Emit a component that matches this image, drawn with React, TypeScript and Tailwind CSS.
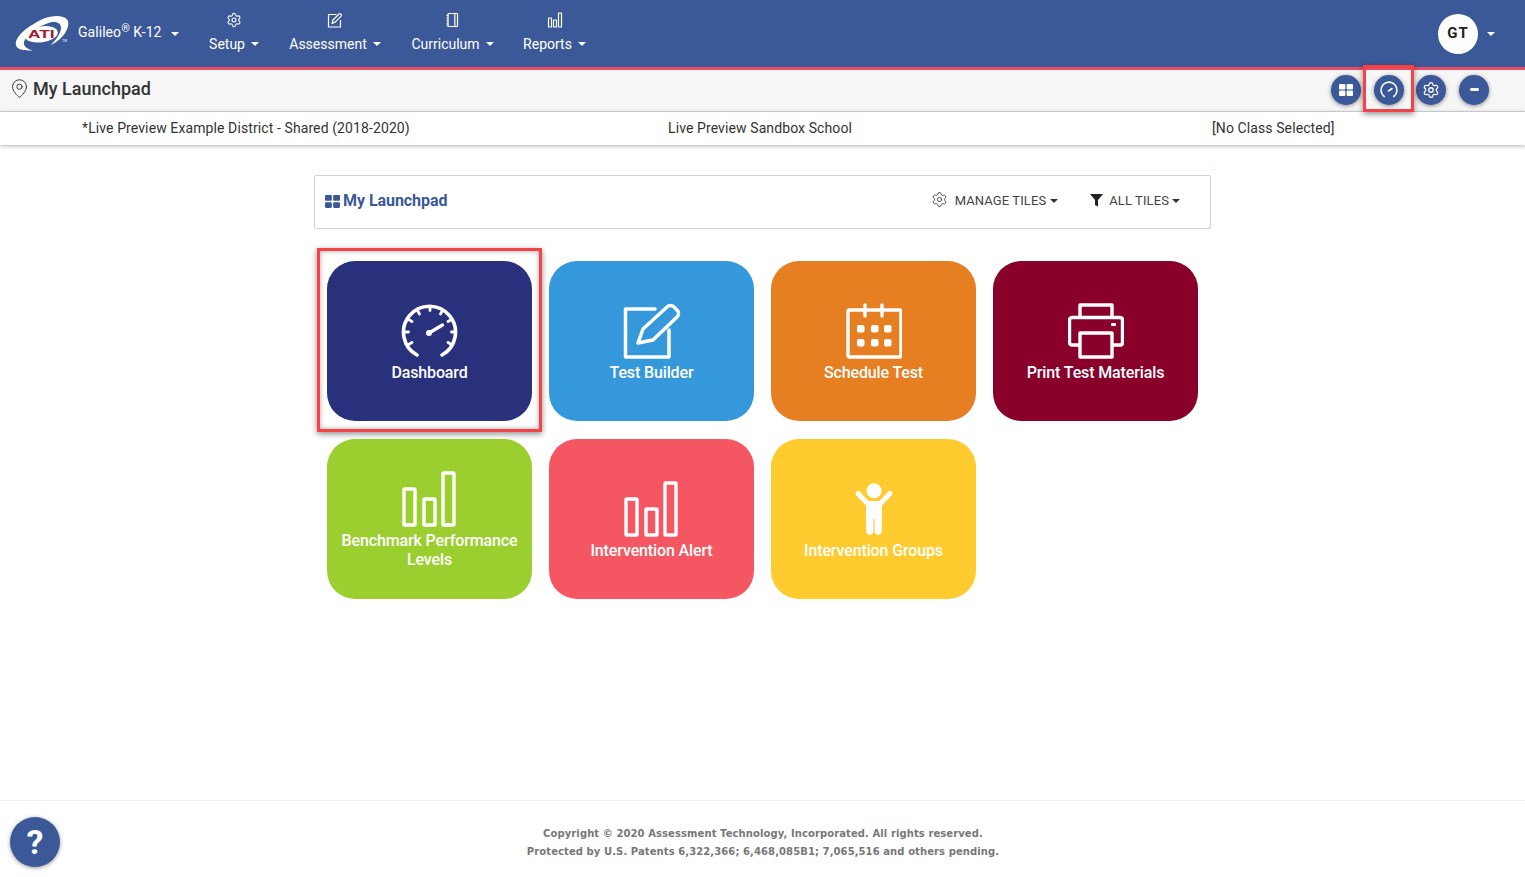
import React from 'react';
import { Settings, MapPin } from 'lucide-react';

const Caret = ({ className = 'border-t-white' }: { className?: string }) => (
  <span className={`inline-block h-0 w-0 border-x-[4px] border-t-[4px] border-x-transparent ${className}`} />
);

// drawn on the 3x crop of the logo, so 210x150 units -> 70x50 px
const Logo = () => (
  <svg width="70" height="50" viewBox="0 0 210 150" className="shrink-0">
    <path d="M172 32C130 18 62 40 30 85C14 110 26 128 74 124C48 118 40 104 56 84C82 52 130 34 172 32Z" fill="#fff" />
    <path d="M70 52C100 22 160 10 178 32C190 52 165 92 128 108C150 88 166 62 156 46C144 32 100 36 70 52Z" fill="#fff" />
    <ellipse cx="100" cy="76" rx="50" ry="24" transform="rotate(-8 100 76)" fill="#fff" />
    <text x="60" y="86" fontSize="30" fontWeight="700" fill="#a4162e" textLength="80" lengthAdjust="spacingAndGlyphs" fontFamily="'Liberation Sans', sans-serif">ATI</text>
    <text x="163" y="100" fontSize="10" fill="#fff" fontFamily="'Liberation Sans', sans-serif">TM</text>
  </svg>
);

const NotebookIcon = () => (
  <svg width="15" height="16" viewBox="0 0 15 16" fill="none" stroke="#fff" strokeWidth="1.2">
    <rect x="3" y="1.500" width="9.500" height="13" rx="0.6" />
    <path d="M9.800 1.500v13M1.500 3.500h2M1.500 6h2M1.500 8.500h2M1.500 11h2M1.500 13h2" />
  </svg>
);

const BarsIcon = () => (
  <svg width="16" height="16" viewBox="0 0 16 16" fill="none" stroke="#fff" strokeWidth="1.2">
    <rect x="1.500" y="6" width="3" height="9" rx="0.3" />
    <rect x="6.500" y="8" width="3" height="7" rx="0.3" />
    <rect x="11.500" y="1" width="3" height="14" rx="0.3" />
  </svg>
);

const EditSmall = () => (
  <svg width="16" height="16" viewBox="0 0 16 16" fill="none" stroke="#fff" strokeWidth="1.2" strokeLinejoin="round">
    <path d="M9.500 2.500H1.500v12.500h12V8" />
    <path d="M5 11.500l1-3.500 6-6c.6-.6 1.400-.5 2 .1s.7 1.400.1 2l-6 6z" />
  </svg>
);

const GridIcon = ({ size, color }: { size: number; color: string }) => (
  <svg width={size} height={size} viewBox="0 0 14 14" fill={color}>
    <rect x="0" y="1" width="6.400" height="5.400" rx="1" />
    <rect x="7.600" y="1" width="6.400" height="5.400" rx="1" />
    <rect x="0" y="7.600" width="6.400" height="5.400" rx="1" />
    <rect x="7.600" y="7.600" width="6.400" height="5.400" rx="1" />
  </svg>
);

const GaugeSmall = () => (
  <svg width="20" height="20" viewBox="0 0 20 20" fill="none" stroke="#fff" strokeWidth="1.600" strokeLinecap="round">
    <path d="M5.200 16.500A8 8 0 1 1 14.800 16.500" />
    <path d="M9.500 11l3.500-2.500" />
  </svg>
);

const GaugeIcon = () => (
  <svg width="58" height="56" viewBox="0 0 58 56" fill="none" stroke="#fff" strokeWidth="3.600" strokeLinecap="round">
    <path d="M16 52A26 26 0 1 1 41 52" />
    <path d="M29 4v3.500M16.500 7.500l2 3.500M41.500 7.500l-2 3.500M7.500 16.500l3.500 2M50.500 16.500l-3.500 2M4 29h3.500M50.500 29h3.500M7.500 41.500l3.500-2M50.500 41.500l-3.500-2" strokeWidth="2.800" />
    <path d="M28 30l13.500-8" strokeWidth="3.200" />
    <circle cx="28" cy="30" r="3" fill="#fff" stroke="none" />
  </svg>
);

const EditIcon = () => (
  <svg width="58" height="56" viewBox="0 0 58 56" fill="none" stroke="#fff" strokeWidth="3.500" strokeLinejoin="round" strokeLinecap="round">
    <path d="M32 6H2.500v48H46V27" />
    <path d="M15 40l5-14L44 4c2-2 5-2 7 0l3 3c2 2 2 5 0 7L30 37z" />
  </svg>
);

const CalendarIcon = () => (
  <svg width="56" height="56" viewBox="0 0 56 56" fill="none" stroke="#fff" strokeWidth="3.400" strokeLinejoin="round">
    <rect x="2" y="7" width="53" height="47" rx="1.500" />
    <path d="M19 2v11M36 2v11" strokeLinecap="round" />
    <g fill="#fff" stroke="none">
      <rect x="11" y="22" width="7.500" height="7.500" rx="1.800" />
      <rect x="25" y="22" width="7.500" height="7.500" rx="1.800" />
      <rect x="38" y="22" width="7.500" height="7.500" rx="1.800" />
      <rect x="11" y="36" width="7.500" height="7.500" rx="1.800" />
      <rect x="25" y="36" width="7.500" height="7.500" rx="1.800" />
      <rect x="38" y="36" width="7.500" height="7.500" rx="1.800" />
    </g>
  </svg>
);

const PrinterIcon = () => (
  <svg width="56" height="56" viewBox="0 0 56 56" fill="none" stroke="#fff" strokeWidth="3.400" strokeLinejoin="round">
    <path d="M12 42H4c-1.500 0-2.500-1-2.500-2.500V17c0-1.500 1-2.500 2.500-2.500h48c1.500 0 2.500 1 2.500 2.500v22.500c0 1.500-1 2.500-2.500 2.500h-8" />
    <path d="M12 14V2h32v12" />
    <rect x="12" y="30" width="32" height="24" />
    <rect x="43" y="20" width="5" height="3" rx="1" fill="#fff" stroke="none" />
  </svg>
);

const BigBars = () => (
  <svg width="56" height="56" viewBox="0 0 56 56" fill="none" stroke="#fff" strokeWidth="3.400" strokeLinejoin="round">
    <rect x="2" y="18" width="11" height="36" rx="0.8" />
    <rect x="22" y="28" width="11" height="26" rx="0.8" />
    <rect x="41" y="2" width="11" height="52" rx="0.8" />
  </svg>
);

const PersonIcon = () => (
  <svg width="40" height="52" viewBox="0 0 40 52" fill="#fff" stroke="none">
    <circle cx="20" cy="7.700" r="7.500" />
    <rect x="12" y="18" width="16" height="18" rx="1" />
    <path d="M15.800 32v16M24.200 32v16" stroke="#fff" strokeWidth="7.300" strokeLinecap="round" fill="none" />
    <path d="M13 20L4 10.500M27 20l9-9.500" stroke="#fff" strokeWidth="5" strokeLinecap="round" fill="none" />
  </svg>
);

const navItems = [
  { label: 'Setup', icon: <Settings size={16} strokeWidth={1.6} />, className: 'w-[51px] ml-[30px]' },
  { label: 'Assessment', icon: <EditSmall />, className: 'w-[93px] ml-[29px]' },
  { label: 'Curriculum', icon: <NotebookIcon />, className: 'w-[84px] ml-[29px]' },
  { label: 'Reports', icon: <BarsIcon />, className: 'w-[64px] ml-[28px]' },
];

const tiles = [
  { label: 'Dashboard', bg: 'bg-[#29317d] pt-[3px]', icon: <GaugeIcon /> },
  { label: 'Test Builder', bg: 'bg-[#3598db] pt-[3px]', icon: <EditIcon /> },
  { label: 'Schedule Test', bg: 'bg-[#e67e22] pt-[3px]', icon: <CalendarIcon /> },
  { label: 'Print Test Materials', bg: 'bg-[#89002b] pt-[3px]', icon: <PrinterIcon /> },
  { label: 'Benchmark Performance Levels', bg: 'bg-[#9bcf2f] pt-[1px]', icon: <BigBars /> },
  { label: 'Intervention Alert', bg: 'bg-[#f55762] pt-[3px]', icon: <BigBars /> },
  { label: 'Intervention Groups', bg: 'bg-[#ffcb2f] pt-[3px]', icon: <PersonIcon /> },
];

const RoundButton = ({ children, className = '' }: { children: React.ReactNode; className?: string }) => (
  <button
    type="button"
    className={`flex h-[30px] w-[30px] items-center justify-center rounded-full bg-[#3b5998] shadow-[0_1px_4px_rgba(0,0,0,0.45)] ${className}`}
  >
    {children}
  </button>
);

export default function App() {
  return (
    <div className="relative flex min-h-[877px] flex-col bg-white font-['Roboto',sans-serif] text-[#333]">
      <header className="flex h-[70px] items-center border-b-[3px] border-[#ea4c64] bg-[#3b5998] text-white">
        <div className="ml-[8px] flex items-center">
          <Logo />
          <span className="mb-[2px] text-[14px] tracking-[0.05px]">
            Galileo<sup className="text-[11px]">®</sup> K-12
          </span>
          <Caret className="ml-[9px] border-t-white" />
        </div>
        <nav className="flex pb-[4px]">
          {navItems.map(item => (
            <div key={item.label} className={`flex flex-col items-center gap-[2px] ${item.className}`}>
              <span className="flex h-[22px] items-center">{item.icon}</span>
              <span className="flex items-center gap-[6px] text-[14px] leading-[22px] whitespace-nowrap">
                {item.label}
                <Caret />
              </span>
            </div>
          ))}
        </nav>
        <div className="ml-auto mr-[30px] flex items-center gap-[9px]">
          <div className="flex h-10 w-10 items-center justify-center rounded-full bg-white text-[15px] font-bold tracking-[1px] text-[#222]">
            GT
          </div>
          <Caret />
        </div>
      </header>

      <div className="flex h-[42px] items-center border-b border-[#d8d8d8] bg-[#f6f6f6] pb-[2px] pl-[9px]">
        <MapPin size={21} strokeWidth={1.100} className="mb-[3px] text-[#333]" />
        <h1 className="mb-[1px] ml-[3px] text-[18px] font-medium leading-none text-[#333]">My Launchpad</h1>
        <div className="ml-auto mr-[36px] flex items-center gap-[13px]">
          <RoundButton>
            <GridIcon size={14} color="#fff" />
          </RoundButton>
          <RoundButton>
            <GaugeSmall />
          </RoundButton>
          <RoundButton className="-ml-[1px]">
            <Settings size={18} strokeWidth={1.700} className="text-white" />
          </RoundButton>
          <RoundButton>
            <span className="h-[3px] w-[9px] rounded-sm bg-white" />
          </RoundButton>
        </div>
      </div>

      <div className="flex h-[33px] items-center bg-white pb-[1px] text-[14px] tracking-[0.1px] text-[#333] shadow-[0_1px_4px_rgba(0,0,0,0.3)]">
        <span className="ml-[82px] w-[586px]">*Live Preview Example District - Shared (2018-2020)</span>
        <span className="w-[544px]">Live Preview Sandbox School</span>
        <span>[No Class Selected]</span>
      </div>

      <main className="mx-auto mt-[30px] w-[897px] flex-1">
        <div className="flex h-[54px] items-center rounded-[2px] border border-[#c9d2e0] pb-[2px] pl-[10px] pr-[30px]">
          <GridIcon size={15} color="#3b5998" />
          <span className="ml-[3px] text-[16px] font-bold tracking-[-0.05px] text-[#3b5998]">My Launchpad</span>
          <div className="ml-auto flex items-center text-[13px] tracking-[0.1px] text-[#444]">
            <Settings size={17} strokeWidth={1.200} className="mb-[3px] text-[#333]" />
            <span className="ml-[7px]">MANAGE TILES</span>
            <Caret className="ml-[4px] border-t-[#333]" />
            <svg width="13" height="14" viewBox="0 0 13 14" className="mb-[2px] ml-[32px]" fill="#222">
              <path d="M0 1h13L8 7v6.500L5 12V7z" />
            </svg>
            <span className="ml-[6px]">ALL TILES</span>
            <Caret className="ml-[3px] border-t-[#333]" />
          </div>
        </div>

        <div className="mt-[32px] grid grid-cols-[repeat(4,205px)] gap-x-[17px] gap-y-[18px] pl-[13px]">
          {tiles.map(tile => (
            <div
              key={tile.label}
              className={`flex h-[160px] flex-col items-center justify-center rounded-[28px] px-[10px] text-center text-white ${tile.bg}`}
            >
              <span className="flex h-[56px] items-center">{tile.icon}</span>
              <span className="mt-[4px] text-[16px] font-medium leading-[19px] tracking-[-0.13px]">{tile.label}</span>
            </div>
          ))}
        </div>
      </main>

      <footer className="flex h-[77px] items-start justify-center border-t border-[#eeeeee] pl-[1px] pt-[24px] text-center font-['DejaVu_Sans',sans-serif] text-[10px] font-bold leading-[18px] tracking-[0.09px] text-[#777]">
        <div>
          <p>Copyright © 2020 Assessment Technology, Incorporated. All rights reserved.</p>
          <p>Protected by U.S. Patents 6,322,366; 6,468,085B1; 7,065,516 and others pending.</p>
        </div>
      </footer>

      <button
        type="button"
        className="absolute left-[10px] top-[817px] flex h-[50px] w-[50px] items-center justify-center rounded-full bg-[#3b5998] text-[34px] font-bold text-white shadow-[0_1px_4px_rgba(0,0,0,0.4)]"
      >
        ?
      </button>

      <div className="absolute left-[317px] top-[248px] h-[184px] w-[225px] border-[3px] border-[#f44247] shadow-[0_2px_6px_rgba(0,0,0,0.45),inset_0_0_5px_rgba(0,0,0,0.35)]" />
      <div className="absolute left-[1363px] top-[65px] h-[47px] w-[51px] border-[3px] border-[#f44247] shadow-[0_2px_6px_rgba(0,0,0,0.45)]" />
    </div>
  );
}
